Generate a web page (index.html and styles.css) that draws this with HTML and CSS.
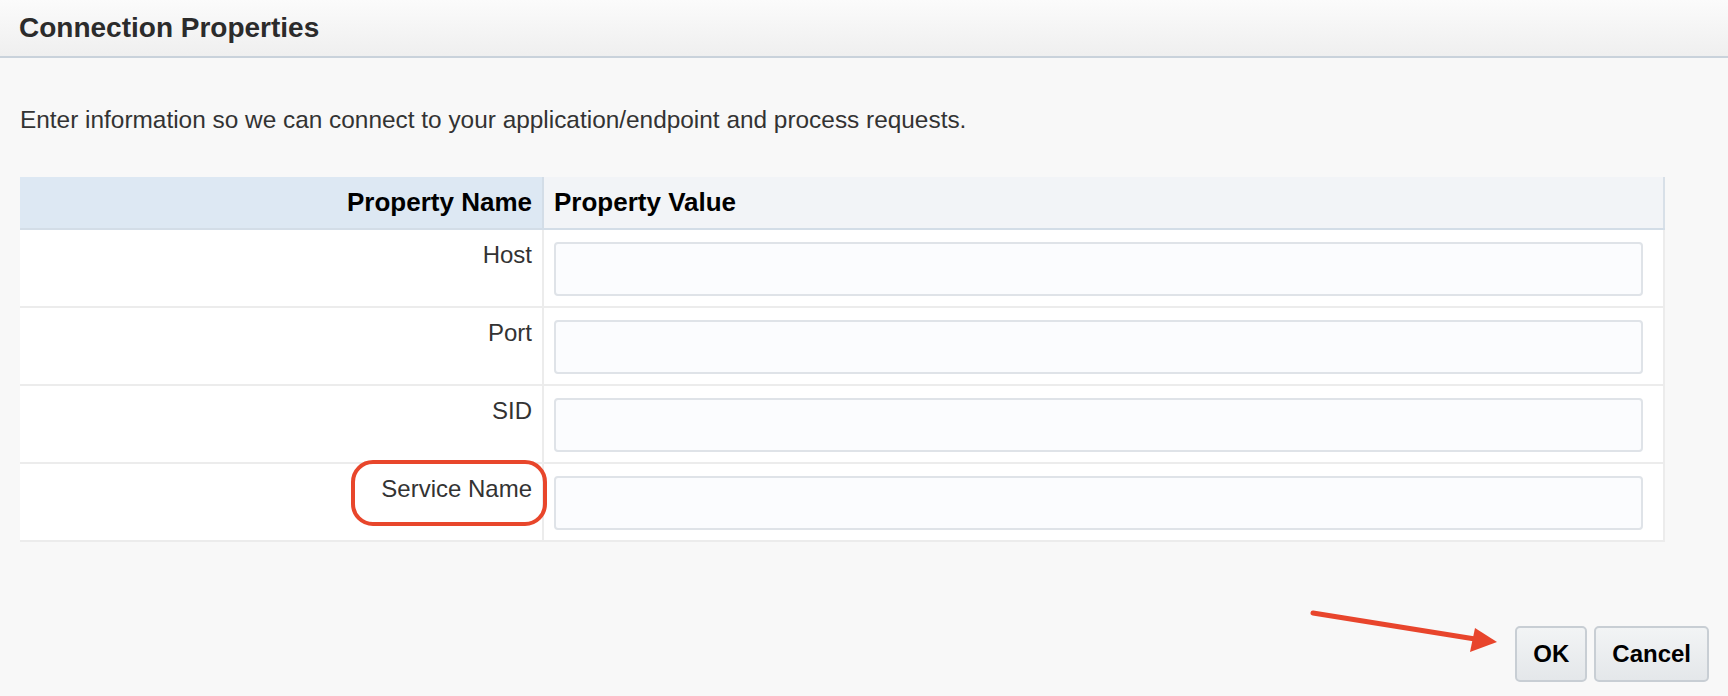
FILE: index.html
```html
<!DOCTYPE html>
<html lang="en">
<head>
<meta charset="utf-8">
<title>Connection Properties</title>
<link rel="stylesheet" href="styles.css">
</head>
<body>
<header class="titlebar">
  <h1 class="title">Connection Properties</h1>
</header>
<main class="content">
  <p class="intro">Enter information so we can connect to your application/endpoint and process requests.</p>
  <table class="props">
    <thead>
      <tr>
        <th class="head-name">Property Name</th>
        <th class="head-value">Property Value</th>
      </tr>
    </thead>
    <tbody>
      <tr>
        <td class="cell-name"><span class="label">Host</span></td>
        <td class="cell-value"><input class="field" type="text" aria-label="Host"></td>
      </tr>
      <tr>
        <td class="cell-name"><span class="label">Port</span></td>
        <td class="cell-value"><input class="field" type="text" aria-label="Port"></td>
      </tr>
      <tr>
        <td class="cell-name"><span class="label">SID</span></td>
        <td class="cell-value"><input class="field" type="text" aria-label="SID"></td>
      </tr>
      <tr>
        <td class="cell-name"><span class="label highlight">Service Name</span></td>
        <td class="cell-value"><input class="field" type="text" aria-label="Service Name"></td>
      </tr>
    </tbody>
  </table>
  <div class="actions">
    <svg class="pointer" width="200" height="60" viewBox="0 0 200 60" aria-hidden="true">
      <line x1="8" y1="13" x2="170" y2="39" stroke="#e8452c" stroke-width="5" stroke-linecap="round"/>
      <polygon points="192,42 170,28 165,52" fill="#e8452c"/>
    </svg>
    <button class="btn" type="button">OK</button>
    <button class="btn" type="button">Cancel</button>
  </div>
</main>
</body>
</html>
```

FILE: styles.css
```css
* { box-sizing: border-box; }

html, body {
  margin: 0;
  padding: 0;
}

body {
  background: #f8f8f8;
  font-family: "Liberation Sans", Arial, Helvetica, sans-serif;
  color: #333;
  width: 1728px;
  height: 696px;
  overflow: hidden;
}

.titlebar {
  height: 58px;
  background: linear-gradient(#fbfbfb, #efefef);
  border-bottom: 2px solid #c9d2db;
  display: flex;
  align-items: center;
  padding: 0 19px;
}

.title {
  margin: 0;
  font-size: 28px;
  font-weight: bold;
  color: #2b2b2b;
  line-height: 32px;
}

.content {
  padding: 0 19px 0 20px;
}

.intro {
  margin: 48px 0 0;
  font-size: 24.4px;
  line-height: 28px;
  color: #333;
}

.props {
  margin-top: 43px;
  width: 1645px;
  border-collapse: collapse;
  table-layout: fixed;
  background: #fff;
}

.props th {
  height: 52px;
  font-size: 26px;
  font-weight: bold;
  color: #000;
  padding: 0 10px;
  border-bottom: 2px solid #d3dde7;
}

.head-name {
  width: 523px;
  text-align: right;
  background: #dde8f3;
  border-right: 2px solid #d3dde7;
}

.head-value {
  text-align: left;
  background: #f2f4f7;
  border-right: 2px solid #d8e0e8;
}

.props td {
  height: 78px;
  vertical-align: top;
  border-bottom: 2px solid #ececec;
}

.cell-name {
  text-align: right;
  padding: 11px 10px 0 10px;
  border-right: 2px solid #ececec;
}

.cell-value {
  padding: 12px 20px 10px 10px;
  border-right: 2px solid #ececec;
}

.label {
  display: inline-block;
  font-size: 24px;
  line-height: 28px;
  color: #333;
}

.highlight {
  position: relative;
}

.highlight::after {
  content: "";
  position: absolute;
  left: -30px;
  right: -15px;
  top: -15px;
  bottom: -23px;
  border: 4px solid #e8462b;
  border-radius: 22px;
}

.field {
  display: block;
  width: 100%;
  height: 54px;
  background: #fbfcfe;
  border: 2px solid #dfe3e8;
  border-radius: 4px;
  margin: 0;
}

.actions {
  position: relative;
  display: flex;
  justify-content: flex-end;
  gap: 7px;
  margin-top: 84px;
}

.pointer {
  position: absolute;
  right: 204px;
  top: -26px;
}

.btn {
  height: 56px;
  padding: 0 16px;
  font-family: "Liberation Sans", Arial, Helvetica, sans-serif;
  font-size: 24px;
  font-weight: bold;
  color: #000;
  background: linear-gradient(#f2f4f5, #e4e7ea);
  border: 2px solid #c8ced4;
  border-radius: 5px;
}
```
